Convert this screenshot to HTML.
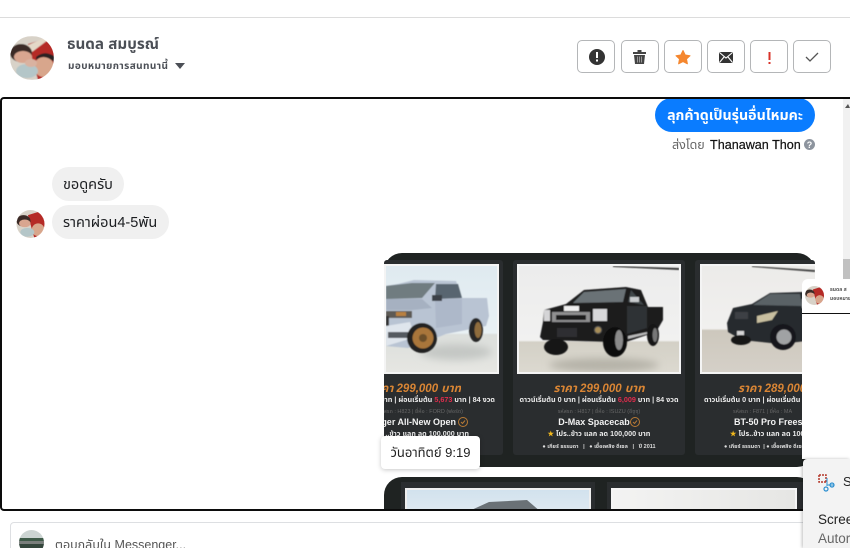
<!DOCTYPE html>
<html lang="th"><head><meta charset="utf-8"><style>
html{margin:0;padding:0;width:850px;height:548px;overflow:hidden;background:#fff}
body{margin:0;padding:0;background:#fff;width:850px;height:548px;position:relative;overflow:hidden;font-family:"Liberation Sans","Noto Sans Thai","Noto Sans Thai UI","Loma","Garuda",sans-serif;color:#1c1e21}
.a{position:absolute;white-space:nowrap}
.btn{position:absolute;top:40px;width:38px;height:33px;box-sizing:border-box;border:1px solid #b4b6b8;border-radius:5px;background:#fff}
.btn svg{position:absolute;left:0;top:0}
.bub{position:absolute;background:#f0f0f0;border-radius:17px;font-size:14.5px;line-height:36px;height:34px;padding-left:11px;box-sizing:border-box;white-space:nowrap}
.panel{position:absolute;top:260px;height:195px;background:#2a2d2f;border-radius:3px}
.photo{position:absolute;top:264px;height:110px;border:2px solid #f4f4f4;box-sizing:border-box;overflow:hidden;background:#eee}
.photo svg{position:absolute;left:0;top:0}
.t{position:absolute;white-space:nowrap;text-align:center;filter:blur(.25px);line-height:12px}
.price{font-size:11.5px;font-weight:bold;font-style:italic;color:#d98534;top:383px}
.l2{font-size:7.2px;font-weight:bold;color:#e8e8e8;top:394px}
.l3{font-size:5.5px;color:#666;top:406px}
.l4{font-size:9px;font-weight:bold;color:#f2f2f2;top:416px}
.l5{font-size:7.2px;font-weight:bold;color:#e8e8e8;top:428px}
.l6{font-size:5.5px;font-weight:bold;color:#ddd;top:441px}
</style></head><body>
<div class="a" style="left:0;top:17px;width:850px;height:1px;background:#dcdcdc"></div>

<svg class="a" style="left:10px;top:36px" width="44" height="44" viewBox="0 0 44 44"><defs><clipPath id="c1"><circle cx="22" cy="22" r="22"/></clipPath><filter id="b1"><feGaussianBlur stdDeviation=".6"/></filter></defs><g clip-path="url(#c1)"><g filter="url(#b1)"><rect width="44" height="44" fill="#d8d2c8"/><path d="M18 8L44 0V44H28Z" fill="#b52a26"/><path d="M16 10L34 2 38 4 22 16Z" fill="#e4d8c8"/><ellipse cx="11" cy="17" rx="11" ry="9" fill="#3a2c28"/><ellipse cx="13" cy="21" rx="9" ry="6" fill="#d9a690"/><ellipse cx="34" cy="31" rx="10" ry="10" fill="#d8a68c"/><path d="M26 24Q34 17 44 26L44 20Q34 14 26 21Z" fill="#2c2220"/><ellipse cx="17" cy="35" rx="11" ry="7" fill="#b4c6c8"/><ellipse cx="21" cy="27" rx="6" ry="4" fill="#d9b2a0"/></g></g></svg>
<div class="a" style="left:67px;top:36px;font-size:15.2px;font-weight:bold;color:#4b4f56;line-height:18px">ธนดล สมบูรณ์</div>
<div class="a" style="left:68px;top:60px;font-size:10px;letter-spacing:.4px;font-weight:bold;color:#4b4f56;line-height:13px">มอบหมายการสนทนานี้</div>
<svg class="a" style="left:174px;top:62px" width="12" height="8"><path d="M1 1H11L6 7Z" fill="#4b4f56"/></svg>

<div class="btn" style="left:577px"><svg width="36" height="31"><circle cx="19" cy="16" r="8" fill="#333"/><rect x="18" y="11" width="2" height="6" fill="#fff"/><rect x="18" y="18.500" width="2" height="2" fill="#fff"/></svg></div>
<div class="btn" style="left:621px"><svg width="36" height="31"><path d="M11 11H24V13H11ZM15.500 9H19.500V11H15.500Z" fill="#444"/><path d="M12 14H23L22 23H13Z" fill="#444"/><path d="M15.500 15.500V21.500M17.500 15.500V21.500M19.500 15.500V21.500" stroke="#bbb" stroke-width=".7"/></svg></div>
<div class="btn" style="left:664px"><svg width="36" height="31"><path d="M18 9.500L20.200 14 25 14.700 21.500 18 22.400 22.800 18 20.500 13.600 22.800 14.500 18 11 14.700 15.800 14Z" fill="#f5872f" stroke="#f5872f" stroke-linejoin="round"/></svg></div>
<div class="btn" style="left:707px"><svg width="36" height="31"><rect x="11" y="11" width="14" height="11" rx="1" fill="#333"/><path d="M11.500 11.500L18 17 24.500 11.500M11.500 21.500L16 16M24.500 21.500L20 16" stroke="#fff" stroke-width="1.100" fill="none"/></svg></div>
<div class="btn" style="left:750px"><svg width="36" height="31"><rect x="17.500" y="11" width="2" height="8" fill="#d8332a"/><rect x="17.500" y="21" width="2" height="2" fill="#d8332a"/></svg></div>
<div class="btn" style="left:793px"><svg width="36" height="31"><path d="M12 16L16 20 24 12" stroke="#555" stroke-width="1.300" fill="none"/></svg></div>

<div class="a" style="left:843px;top:98px;width:7px;height:200px;background:#f1f1f1"></div>
<svg class="a" style="left:845px;top:103px" width="5" height="6"><path d="M3 1L0 5H5V5Z" fill="#555"/></svg>
<div class="a" style="left:843px;top:259px;width:7px;height:20px;background:#c1c1c1"></div>

<div class="a" style="left:655px;top:98px;width:160px;height:34px;background:#0a7cff;border-radius:17px;color:#fff;font-size:14.2px;font-weight:bold;line-height:36px;text-align:center">ลุกค้าดูเป็นรุ่นอื่นไหมคะ</div>
<div class="a" style="left:672px;top:137px;font-size:12.5px;line-height:16px;color:#666">ส่งโดย</div>
<div class="a" style="left:710px;top:137px;font-size:12.6px;line-height:16px;color:#111;-webkit-text-stroke:.2px #111">Thanawan Thon</div>
<svg class="a" style="left:804px;top:139px" width="11" height="11"><circle cx="5.500" cy="5.500" r="5.500" fill="#8d949e"/><text x="5.500" y="9" font-size="9" font-weight="bold" fill="#fff" text-anchor="middle" font-family="Liberation Sans">?</text></svg>

<div class="bub" style="left:52px;top:167px;width:72px">ขอดูครับ</div>
<div class="bub" style="left:52px;top:205px;width:117px">ราคาผ่อน4-5พัน</div>
<svg class="a" style="left:16px;top:210px" width="29" height="28" viewBox="0 0 44 44"><defs><clipPath id="c2"><circle cx="22" cy="22" r="22"/></clipPath></defs><g clip-path="url(#c2)"><g filter="url(#b1)"><rect width="44" height="44" fill="#d8d2c8"/><path d="M18 8L44 0V44H28Z" fill="#b52a26"/><ellipse cx="11" cy="17" rx="11" ry="9" fill="#3a2c28"/><ellipse cx="13" cy="21" rx="9" ry="6" fill="#d9a690"/><ellipse cx="34" cy="31" rx="10" ry="10" fill="#d8a68c"/><ellipse cx="17" cy="35" rx="11" ry="7" fill="#b4c6c8"/></g></g></svg>

<!-- card 1 -->
<div class="a" style="left:384px;top:253px;width:431px;height:214px;background:#1f2322;border-radius:18px;overflow:hidden"></div>
<div class="panel" style="left:384px;width:119px"></div>
<div class="panel" style="left:513px;width:172px"></div>
<div class="panel" style="left:695px;width:120px"></div>

<svg width="0" height="0" style="position:absolute"><defs><filter id="bl" x="-5%" y="-5%" width="110%" height="110%"><feGaussianBlur stdDeviation=".55"/></filter><filter id="bf" x="-20%" y="-40%" width="140%" height="180%"><feGaussianBlur stdDeviation="4"/></filter></defs></svg>

<div class="photo" style="left:384px;width:115px;background:linear-gradient(#dfeaf0 0,#e9f1f4 63%,#dcdfdc 65%,#e6e6e2 100%)">
<svg width="113" height="106" viewBox="0 0 113 106"><ellipse cx="70" cy="86" rx="36" ry="8" fill="#c4c7c4" filter="url(#bf)"/><g filter="url(#bl)">
<path d="M0 20L12 18 28 14 70 15 76 32 101 32 103 50 100 60 60 68 50 72 22 82 0 80Z" fill="#b9c4d3"/>
<path d="M0 20L26 17 49 17 36 32 0 33Z" fill="#707c80"/>
<path d="M50 18L72 18 76 32 49 33Z" fill="#59656f"/>
<path d="M49 33H76V58L50 62Z" fill="#adb8c9"/>
<rect x="46" y="29" width="10" height="6" fill="#3a3f46"/>
<path d="M0 33L36 33 46 42 26 44 0 44Z" fill="#a6b1c1"/>
<rect x="0" y="45" width="26" height="7" fill="#5d5a55"/><rect x="10" y="46" width="10" height="4" fill="#b98040"/>
<rect x="0" y="50" width="3" height="16" fill="#333"/>
<path d="M0 60L24 56 28 68 20 74 0 80Z" fill="#dfe5ec"/>
<rect x="2" y="66" width="20" height="6" fill="#555a60"/>
<circle cx="36" cy="72" r="15" fill="#242424"/><circle cx="37" cy="72" r="10.500" fill="#a9763a"/><circle cx="37" cy="72" r="4" fill="#6c4f2a"/>
<ellipse cx="90" cy="64" rx="7" ry="12" fill="#252525"/><ellipse cx="92" cy="64" rx="3.500" ry="8" fill="#8e6c3c"/>
</g></svg></div>

<div class="photo" style="left:517px;width:164px;background:linear-gradient(#ececec 0,#f1f1f0 70%,#d3d0c6 72%,#dcd9d0 100%)">
<svg width="162" height="106" viewBox="0 0 162 106"><ellipse cx="85" cy="99" rx="55" ry="7" fill="#b5b2a8" filter="url(#bf)"/><g filter="url(#bl)">
<path d="M94 0L160 2 160 4 94 1Z" fill="#333"/>
<path d="M21 71L24 56 25 44 47 38 65 24 107 21 122 24 129 41 144 41 144 54 137 66 107 76 94 76 24 74Z" fill="#1b1b1e"/>
<path d="M54 37L65 26 107 23 104 36Z" fill="#6b7276"/>
<path d="M109 36L112 24 125 39Z" fill="#41464a"/>
<rect x="111" y="31" width="9" height="5" fill="#c9ccce"/>
<path d="M108 40H128V62L108 68Z" fill="#2f3135"/>
<rect x="33" y="46" width="38" height="10" fill="#8f8f90"/><rect x="37" y="49" width="30" height="5" fill="#1c1c1c"/>
<rect x="45" y="40" width="15" height="5" fill="#f0f0f0"/>
<rect x="74" y="43" width="14" height="12" fill="#d8d8da"/><rect x="25" y="44" width="6" height="11" fill="#d4d4d6"/>
<circle cx="79" cy="64" r="3.500" fill="#a88e58" stroke="#555"/>
<rect x="38" y="62" width="20" height="9" fill="#2e2e30"/>
<path d="M109 70L128 66 128 68 109 73Z" fill="#bbb"/>
<ellipse cx="37" cy="81" rx="12" ry="8" fill="#141414"/>
<ellipse cx="96" cy="76" rx="12" ry="15" fill="#111"/><ellipse cx="100" cy="74" rx="4" ry="10" fill="#8a8a8a"/>
<ellipse cx="134" cy="69" rx="6" ry="11" fill="#141414"/><ellipse cx="136" cy="69" rx="2.500" ry="7" fill="#777"/>
</g></svg></div>

<div class="photo" style="left:700px;width:115px;background:linear-gradient(#ecebe9 0,#f1f0ef 59%,#cdc8bd 61%,#d5d0c8 100%);border-right:0">
<svg width="113" height="106" viewBox="0 0 113 106"><g filter="url(#bl)">
<path d="M50 0L113 4 113 6 50 1Z" fill="#444"/>
<path d="M25 57L31 42 50 38 68 27 100 26 113 26V74L78 78 40 74 26 66Z" fill="#26292d"/>
<path d="M51 39L68 28 98 28 100 40Z" fill="#5a6266"/>
<rect x="33" y="46" width="13" height="7" fill="#3d3f44"/>
<path d="M55 50L76 45 70 54 55 57Z" fill="#c8bfa0"/>
<rect x="35" y="65" width="7" height="5" fill="#d5d5d5"/>
<ellipse cx="39" cy="74" rx="10" ry="5" fill="#171717"/>
<circle cx="81" cy="71" r="13" fill="#18181a"/><circle cx="82" cy="71" r="7.500" fill="#a0a2a4"/>
<rect x="100" y="33" width="13" height="9" fill="#bfc3c5"/>
</g></svg></div>

<div class="t price" style="left:384px;width:77px;overflow:hidden;text-align:right"><span style="float:right">ราคา 299,000 บาท</span></div>
<div class="t l2" style="left:384px;width:111px;text-align:right;overflow:hidden"><span style="float:right">บาท | ผ่อนเริ่มต้น <span style="color:#e22c4c">5,673</span> บาท | 84 งวด</span></div>
<div class="t l3" style="left:384px;width:79px;text-align:right;overflow:hidden"><span style="float:right">รหัสรถ : H823 | ยี่ห้อ : FORD (ฟอร์ด)</span></div>
<div class="t l4" style="left:384px;width:72px;text-align:right;overflow:hidden"><span style="float:right">ger All-New Open</span></div>
<svg class="a" style="left:457px;top:416px" width="12" height="12"><circle cx="6" cy="6" r="4.500" fill="none" stroke="#b87a35"/><path d="M4 6L5.500 7.500 8 4.500" stroke="#b87a35" fill="none"/></svg>
<div class="t l5" style="left:384px;width:85px;text-align:right;overflow:hidden"><span style="float:right">..ข้าว แลก ลด 100,000 บาท</span></div>

<div class="t price" style="left:513px;width:172px">ราคา 299,000 บาท</div>
<div class="t l2" style="left:513px;width:172px">ดาวน์เริ่มต้น 0 บาท | ผ่อนเริ่มต้น <span style="color:#e22c4c">6,009</span> บาท | 84 งวด</div>
<div class="t l3" style="left:513px;width:172px">รหัสรถ : H817 | ยี่ห้อ : ISUZU (อีซูซุ)</div>
<div class="t l4" style="left:508px;width:172px">D-Max Spacecab</div>
<svg class="a" style="left:629px;top:416px" width="12" height="12"><circle cx="6" cy="6" r="4.500" fill="none" stroke="#b87a35"/><path d="M4 6L5.500 7.500 8 4.500" stroke="#b87a35" fill="none"/></svg>
<div class="t l5" style="left:513px;width:172px"><span style="color:#f2b81c">★</span> โปร..ข้าว แลก ลด 100,000 บาท</div>
<div class="t l6" style="left:513px;width:172px">● เกียร์ ธรรมดา &nbsp; | &nbsp; ● เชื้อเพลิง ดีเซล &nbsp; | &nbsp; ปี 2011</div>

<div class="t price" style="left:738px;width:77px;overflow:hidden;text-align:left">ราคา 289,000 บาท</div>
<div class="t l2" style="left:704px;width:111px;overflow:hidden;text-align:left">ดาวน์เริ่มต้น 0 บาท | ผ่อนเริ่มต้น 5</div>
<div class="t l3" style="left:733px;width:82px;overflow:hidden;text-align:left">รหัสรถ : F871 | ยี่ห้อ : MA</div>
<div class="t l4" style="left:734px;width:81px;overflow:hidden;text-align:left">BT-50 Pro Freestyle</div>
<div class="t l5" style="left:730px;width:85px;overflow:hidden;text-align:left"><span style="color:#f2b81c">★</span> โปร..ข้าว แลก ลด 100</div>
<div class="t l6" style="left:724px;width:91px;overflow:hidden;text-align:left">● เกียร์ ธรรมดา &nbsp;| ● เชื้อเพลิง ดีเซล</div>

<!-- card 2 -->
<div class="a" style="left:384px;top:477px;width:431px;height:34px;background:#1f2322;border-radius:18px 18px 0 0;overflow:hidden">
<div style="position:absolute;left:17px;top:5px;width:194px;height:40px;background:#2a2d2f"></div>
<div style="position:absolute;left:223px;top:5px;width:196px;height:40px;background:#2a2d2f"></div>
<div style="position:absolute;left:21px;top:11px;width:186px;height:40px;background:linear-gradient(#d2e2ee,#e8eef2);border-top:2px solid #eee;border-left:2px solid #eee;border-right:2px solid #eee;box-sizing:border-box"></div>
<svg style="position:absolute;left:21px;top:11px" width="186" height="24"><path d="M62 24L84 14 122 12 136 24Z" fill="#6a7176"/></svg>
<div style="position:absolute;left:227px;top:11px;width:186px;height:40px;background:linear-gradient(90deg,#f3f3f2,#e6e6e4);border-top:2px solid #f5f5f5;border-left:2px solid #f5f5f5;border-right:2px solid #f5f5f5;box-sizing:border-box"></div>
</div>

<!-- timestamp tooltip -->
<div class="a" style="left:381px;top:436px;width:99px;height:33px;background:#fff;border-radius:4px;box-shadow:0 1px 5px rgba(0,0,0,.22);font-size:13px;line-height:33px;text-align:center;color:#222">วันอาทิตย์ 9:19</div>

<!-- frame -->
<div class="a" style="left:0;top:97px;width:860px;height:414px;border:2px solid #0c0c0c;box-sizing:border-box;border-radius:4px"></div>

<!-- reply box -->
<div class="a" style="left:10px;top:522px;width:840px;height:40px;border:1px solid #dddfe2;box-sizing:border-box;border-radius:4px"></div>
<svg class="a" style="left:19px;top:530px" width="25" height="18" viewBox="0 0 25 18"><defs><clipPath id="c3"><circle cx="12.500" cy="12.500" r="12.500"/></clipPath></defs><g clip-path="url(#c3)"><rect width="25" height="18" fill="#ccd4d2"/><rect y="8" width="25" height="3" fill="#3e5a48"/><rect y="11" width="25" height="3" fill="#7a7f7c"/><rect y="14" width="25" height="4" fill="#34463c"/></g></svg>
<div class="a" style="left:55px;top:536px;font-size:12.500px;line-height:18px;color:#555">ตอบกลับใน Messenger...</div>

<!-- overlapping popups -->
<div class="a" style="left:802px;top:279px;width:48px;height:180px;background:#fff;border-radius:6px 0 0 0"></div>
<div class="a" style="left:802px;top:313px;width:48px;height:1px;background:#111"></div>
<svg class="a" style="left:805px;top:286px" width="19" height="19" viewBox="0 0 44 44"><defs><clipPath id="c4"><circle cx="22" cy="22" r="22"/></clipPath></defs><g clip-path="url(#c4)"><rect width="44" height="44" fill="#d8d2c8"/><path d="M18 8L44 0V44H28Z" fill="#b52a26"/><ellipse cx="11" cy="17" rx="11" ry="9" fill="#3a2c28"/><ellipse cx="13" cy="21" rx="9" ry="6" fill="#d9a690"/><ellipse cx="34" cy="31" rx="10" ry="10" fill="#d8a68c"/></g></svg>
<div class="a" style="left:830px;top:287px;font-size:5px;line-height:7px;font-weight:bold;color:#555;width:20px;overflow:hidden">ธนดล ส</div>
<div class="a" style="left:830px;top:296px;font-size:5px;line-height:7px;font-weight:bold;color:#555;width:20px;overflow:hidden">มอบหมาย</div>

<div class="a" style="left:803px;top:459px;width:47px;height:89px;background:#f3f3f3;box-shadow:-1px 0 3px rgba(0,0,0,.25);border-radius:4px 0 0 0"></div>
<svg class="a" style="left:818px;top:474px" width="18" height="18"><path d="M1 1H8V8" fill="none" stroke="#b5382a" stroke-width="1.500" stroke-dasharray="2 1"/><path d="M1 1V8H8" fill="none" stroke="#b5382a" stroke-width="1.500" stroke-dasharray="2 1"/><path d="M9 4V12M9 11L16 11" stroke="#4aa3d8" stroke-width="1.200" fill="none"/><circle cx="8" cy="15" r="2" fill="none" stroke="#2c8fd0" stroke-width="1.200"/><circle cx="14" cy="11" r="2" fill="none" stroke="#2c8fd0" stroke-width="1.200"/></svg>
<div class="a" style="left:843px;top:474px;font-size:13px;line-height:16px;color:#222">Sn</div>
<div class="a" style="left:818px;top:511px;font-size:13.500px;line-height:17px;color:#222">Scree</div>
<div class="a" style="left:818px;top:530px;font-size:13.500px;line-height:17px;color:#666">Autor</div>
</body></html>
